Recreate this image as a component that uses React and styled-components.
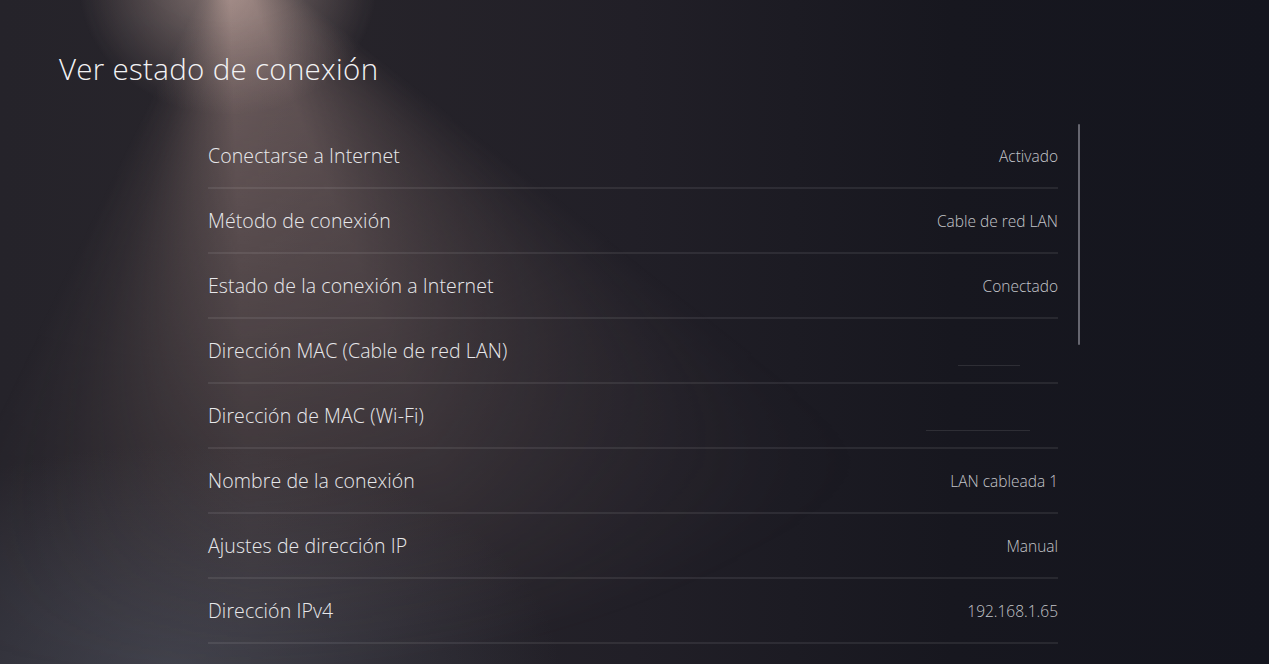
import React from "react";
import styled, { createGlobalStyle } from "styled-components";

const rows = [
  { label: "Conectarse a Internet", value: "Activado" },
  { label: "Método de conexión", value: "Cable de red LAN" },
  { label: "Estado de la conexión a Internet", value: "Conectado" },
  { label: "Dirección MAC (Cable de red LAN)", hidden: 62 },
  { label: "Dirección de MAC (Wi-Fi)", hidden: 104 },
  { label: "Nombre de la conexión", value: "LAN cableada 1" },
  { label: "Ajustes de dirección IP", value: "Manual" },
  { label: "Dirección IPv4", value: "192.168.1.65" },
];

const GlobalStyle = createGlobalStyle`
  html, body {
    margin: 0;
    padding: 0;
    background: #15161f;
  }
  body {
    font-family: "Open Sans", "Noto Sans", sans-serif;
  }
`;

const Screen = styled.div`
  position: relative;
  width: 1269px;
  height: 664px;
  overflow: hidden;
  color: #ececee;
  background:
    radial-gradient(ellipse 520px 300px at 170px 670px, rgba(95, 100, 115, 0.45), transparent 75%),
    linear-gradient(90deg, #25232a 0%, #28252b 20%, #211f27 50%, #17171f 75%, #14151e 100%);

  /* spotlight beam */
  &::before {
    content: "";
    position: absolute;
    inset: 0;
    background:
      radial-gradient(ellipse 150px 130px at 228px -15px, rgba(225, 195, 185, 0.5), transparent 100%),
      conic-gradient(
        from 128deg at 228px -60px,
        transparent 0deg,
        rgba(150, 125, 120, 0.22) 10deg,
        rgba(180, 150, 144, 0.45) 30deg,
        rgba(180, 150, 144, 0.5) 50deg,
        rgba(165, 138, 132, 0.36) 60deg,
        rgba(150, 125, 120, 0.14) 70deg,
        transparent 78deg
      );
    -webkit-mask-image: radial-gradient(ellipse 1000px 780px at 228px -60px, #000 10%, rgba(0, 0, 0, 0.55) 50%, transparent 95%);
    mask-image: radial-gradient(ellipse 1000px 780px at 228px -60px, #000 10%, rgba(0, 0, 0, 0.55) 50%, transparent 95%);
    pointer-events: none;
  }
`;

const Content = styled.div`
  position: relative;
`;

const Title = styled.h1`
  margin: 0;
  padding: 49px 0 0 59px;
  font-size: 29.5px;
  font-weight: 300;
  line-height: 40px;
  letter-spacing: 0.3px;
  color: #f2f2f4;
`;

const Body = styled.div`
  display: flex;
  padding: 35px 0 0 208px;
`;

const List = styled.ul`
  list-style: none;
  margin: 0;
  padding: 0;
  width: 850px;
`;

const Row = styled.li`
  display: flex;
  align-items: center;
  justify-content: space-between;
  height: 63px;
  border-bottom: 2px solid rgba(255, 255, 255, 0.08);
`;

const Label = styled.span`
  font-size: 19.5px;
  font-weight: 300;
  color: #e8e8eb;
  letter-spacing: 0.1px;
`;

const Value = styled.span`
  font-size: 15.5px;
  font-weight: 300;
  color: #c4c5ca;
`;

const Hidden = styled.span`
  align-self: flex-end;
  margin: 0 ${(p) => (p.$w > 80 ? 28 : 38)}px 16px 0;
  height: 1px;
  background: rgba(255, 255, 255, 0.1);
`;

const ScrollTrack = styled.div`
  margin: 0 0 0 20px;
  width: 2px;
  height: 221px;
  border-radius: 1px;
  background: rgba(200, 200, 210, 0.45);
`;

export default function App() {
  return (
    <>
      <GlobalStyle />
      <Screen>
        <Content>
          <Title>Ver estado de conexión</Title>
          <Body>
            <List>
              {rows.map((r) => (
                <Row key={r.label}>
                  <Label>{r.label}</Label>
                  {r.hidden ? (
                    <Hidden $w={r.hidden} style={{ width: r.hidden }} />
                  ) : (
                    <Value>{r.value}</Value>
                  )}
                </Row>
              ))}
            </List>
            <ScrollTrack />
          </Body>
        </Content>
      </Screen>
    </>
  );
}
